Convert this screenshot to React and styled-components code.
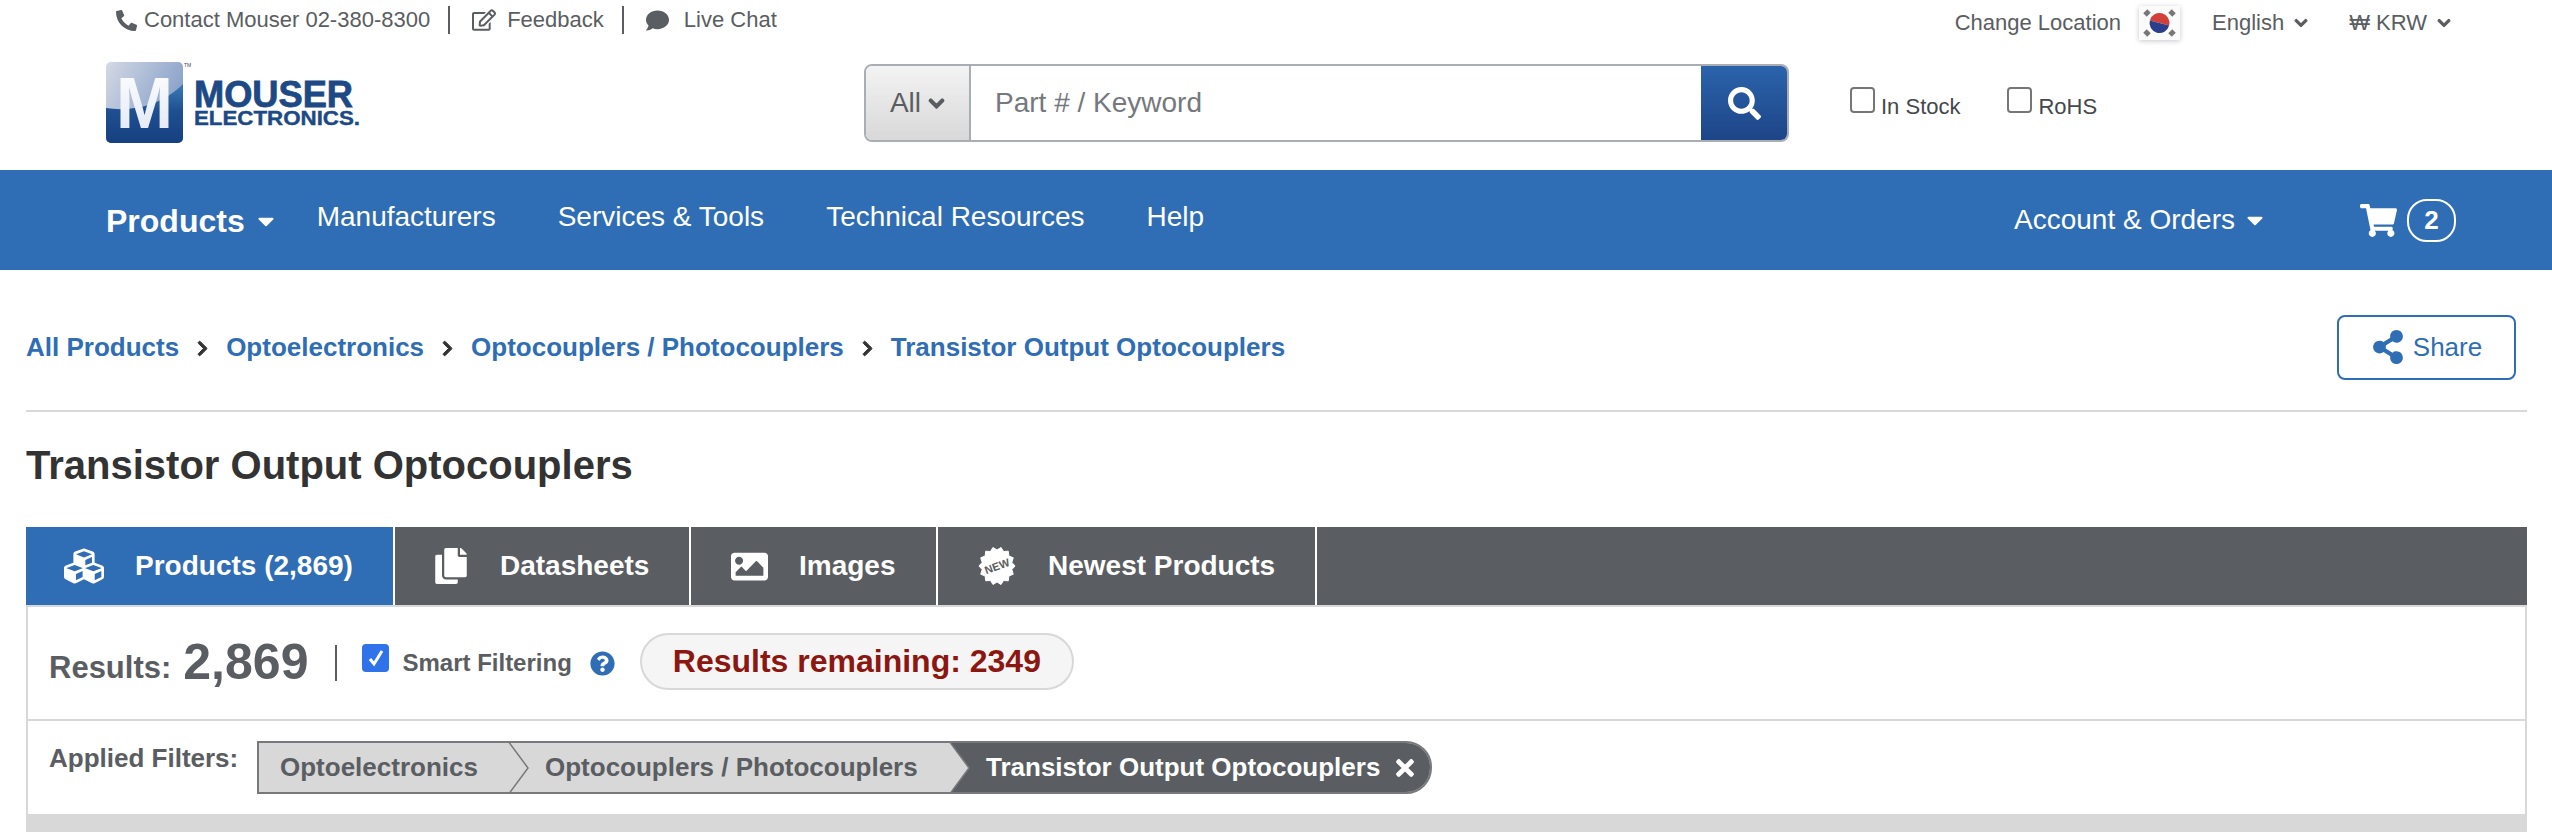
import styled, { createGlobalStyle } from "styled-components";
import {
  FaPhoneAlt, FaRegEdit, FaComment, FaChevronDown, FaSearch, FaShoppingCart, FaChevronRight,
  FaShareAlt, FaCubes, FaCopy, FaImage, FaQuestionCircle, FaTimes, FaCaretDown,
} from "react-icons/fa";

const Global = createGlobalStyle`
  html, body { margin: 0; padding: 0; background: #fff; height: 832px; overflow: hidden; }
  body { font-family: "Liberation Sans", Arial, sans-serif; color: #5a5d61; }
  * { box-sizing: border-box; }
`;

const TopBar = styled.div`
  height: 62px;
  display: flex;
  justify-content: space-between;
  align-items: flex-start;
  padding: 0 101px 0 116px;
`;

const TopLeft = styled.div`
  display: flex;
  align-items: center;
  height: 40px;
  font-size: 22px;
`;

const TopLink = styled.span`
  display: flex;
  align-items: center;
  gap: ${(p) => p.$gap || 10}px;
  svg { flex: none; }
`;

const TopSep = styled.span`
  width: 2px;
  height: 28px;
  background: #5a5d61;
  margin: 0 22px 0 18px;
`;

const TopRight = styled.div`
  display: flex;
  align-items: center;
  height: 46px;
  font-size: 22px;
`;

const Flag = styled.span`
  display: flex;
  margin: 0 32px 0 18px;
  width: 41px;
  height: 34px;
  box-shadow: 0 1px 5px rgba(0, 0, 0, 0.22);
  background: #fbfbfb;
`;

const Dropdown = styled.span`
  display: flex;
  align-items: center;
  gap: 10px;
  margin-right: ${(p) => p.$mr || 0}px;
  svg { stroke: currentColor; stroke-width: 40px; }
`;

const MainRow = styled.div`
  height: 108px;
  display: flex;
  padding-left: 106px;
`;

const LogoWrap = styled.div`
  width: 758px;
  height: 82px;
`;

const Search = styled.div`
  width: 925px;
  height: 78px;
  margin-top: 2px;
  display: flex;
  border: 2px solid #a9aeb4;
  border-radius: 8px;
  overflow: hidden;
`;

const SearchScope = styled.div`
  width: 105px;
  display: flex;
  align-items: center;
  justify-content: center;
  gap: 7px;
  font-size: 28px;
  color: #5a5d61;
  background: linear-gradient(#f3f3f3, #d8d8d8);
  border-right: 2px solid #a9aeb4;
  svg { stroke: currentColor; stroke-width: 40px; }
`;

const SearchField = styled.div`
  flex: 1;
  display: flex;
  align-items: center;
  padding-left: 24px;
  font-size: 28px;
  color: #75787c;
  background: #fff;
`;

const SearchButton = styled.div`
  width: 86px;
  display: flex;
  align-items: center;
  justify-content: center;
  color: #fff;
  background: linear-gradient(#2b63ab, #1d4587);
`;

const Checks = styled.div`
  display: flex;
  margin: 25px 0 0 61px;
  font-size: 22px;
  color: #45484c;
`;

const Check = styled.label`
  display: flex;
  align-items: flex-start;
  gap: 6px;
  margin-right: ${(p) => p.$mr || 0}px;
  span { margin-top: 7px; }
`;

const CheckBox = styled.i`
  display: block;
  width: 25px;
  height: 26px;
  border: 2px solid #767676;
  border-radius: 4px;
  background: #fff;
`;

const Nav = styled.nav`
  height: 100px;
  background: #2f6db5;
  color: #fff;
  display: flex;
  align-items: center;
  padding-left: 106px;
`;

const NavMain = styled.span`
  display: flex;
  align-items: center;
  gap: 8px;
  font-size: 32px;
  font-weight: bold;
  margin-right: 38px;
  padding-top: 2px;
`;

const NavItem = styled.span`
  font-size: 28px;
  margin-right: ${(p) => p.$mr}px;
  padding-bottom: 6px;
`;

const NavRight = styled.div`
  margin-left: auto;
  display: flex;
  align-items: center;
  padding-right: 96px;
`;

const Account = styled.span`
  display: flex;
  align-items: center;
  gap: 7px;
  font-size: 28px;
  margin-right: 92px;
`;

const Cart = styled.span`
  display: flex;
  align-items: center;
  gap: 10px;
`;

const CartCount = styled.span`
  width: 49px;
  height: 43px;
  display: flex;
  align-items: center;
  justify-content: center;
  border: 2px solid #fff;
  border-radius: 20px;
  font-size: 26px;
  font-weight: bold;
`;

const Content = styled.div`
  padding: 0 25px 0 26px;
`;

const CrumbRow = styled.div`
  height: 142px;
  display: flex;
  align-items: center;
  justify-content: space-between;
  padding-right: 11px;
  padding-top: 14px;
  border-bottom: 2px solid #d8d8d8;
`;

const Crumbs = styled.div`
  display: flex;
  align-items: center;
  font-size: 26px;
  font-weight: bold;
  color: #2f6db5;
  svg {
    color: #333;
    margin: 2px 15px 0 15px;
    stroke: currentColor;
    stroke-width: 30px;
  }
`;

const ShareButton = styled.div`
  width: 179px;
  height: 65px;
  display: flex;
  align-items: center;
  justify-content: center;
  gap: 8px;
  border: 2px solid #2f6db5;
  border-radius: 8px;
  color: #2f6db5;
  font-size: 26px;
`;

const Title = styled.h1`
  margin: 0;
  height: 115px;
  display: flex;
  align-items: center;
  padding-bottom: 9px;
  font-size: 40px;
  font-weight: bold;
  color: #333;
`;

const Tabs = styled.div`
  height: 78px;
  display: flex;
  background: #5a5d61;
`;

const Tab = styled.div`
  width: ${(p) => p.$w}px;
  display: flex;
  align-items: center;
  padding-left: ${(p) => p.$pad}px;
  gap: ${(p) => p.$gap}px;
  color: #fff;
  font-size: 28px;
  font-weight: bold;
  background: ${(p) => (p.$active ? "#2f6db5" : "#5a5d61")};
  border-right: 2px solid #fff;
  svg { flex: none; }
`;

const Panel = styled.div`
  border-top: 2px solid #d8d8d8;
  border-left: 2px solid #d8d8d8;
  border-right: 2px solid #d8d8d8;
`;

const ResultsRow = styled.div`
  height: 114px;
  display: flex;
  align-items: center;
  padding-left: 21px;
  border-bottom: 2px solid #d8d8d8;
`;

const ResultsLabel = styled.span`
  font-size: 31px;
  font-weight: bold;
  margin-top: 10px;
`;

const ResultsCount = styled.span`
  font-size: 50px;
  font-weight: bold;
  margin: 0 0 2px 12px;
`;

const RowSep = styled.span`
  width: 2px;
  height: 36px;
  background: #5a5d61;
  margin: 0 25px 0 27px;
`;

const SmartCheck = styled.span`
  width: 27px;
  height: 28px;
  border-radius: 4px;
  background: #2f72ea;
  display: flex;
  align-items: center;
  justify-content: center;
  margin: 0 13px 0 0;
  position: relative;
  top: -5px;
`;

const SmartLabel = styled.span`
  font-size: 24px;
  font-weight: bold;
  margin-right: 18px;
`;

const Remaining = styled.span`
  height: 57px;
  margin: 0 0 3px 25px;
  padding: 0 31px;
  display: flex;
  align-items: center;
  border: 2px solid #d8d8d8;
  border-radius: 29px;
  background: #f5f5f5;
  color: #8b1710;
  font-size: 32px;
  font-weight: bold;
`;

const FiltersRow = styled.div`
  height: 93px;
  display: flex;
  padding: 20px 0 0 21px;
`;

const FiltersLabel = styled.span`
  font-size: 26px;
  font-weight: bold;
  width: 208px;
  margin-top: 2px;
`;

const Chain = styled.div`
  height: 53px;
  display: flex;
  border: 2px solid #77797c;
  border-radius: 0 26px 26px 0;
  overflow: hidden;
  background: #d8d8d8;
  font-size: 26px;
  font-weight: bold;
`;

const Chip = styled.span`
  position: relative;
  display: flex;
  align-items: center;
  width: ${(p) => p.$w}px;
  padding-left: ${(p) => p.$pad}px;
  flex: none;
  svg { position: absolute; top: 0; right: -21px; z-index: 1; }
`;

const LastChip = styled.span`
  flex: 1;
  width: 480px;
  display: flex;
  align-items: center;
  padding-left: 36px;
  gap: 12px;
  background: #5a5d61;
  color: #fff;
`;

const Footer = styled.div`
  height: 40px;
  background: #d8d8d8;
`;

const Logo = () => (
  <svg width="254" height="82" viewBox="0 0 254 82">
    <defs>
      <linearGradient id="logoTop" x1="0" y1="0" x2="1" y2="0.6">
        <stop offset="0" stopColor="#d4d9e4" />
        <stop offset="1" stopColor="#7f9ac6" />
      </linearGradient>
      <linearGradient id="logoBottom" x1="0" y1="0" x2="0" y2="1">
        <stop offset="0" stopColor="#3a7cb6" />
        <stop offset="0.45" stopColor="#1f4f92" />
        <stop offset="1" stopColor="#164080" />
      </linearGradient>
      <linearGradient id="logoM" x1="0" y1="0" x2="0" y2="1">
        <stop offset="0" stopColor="#ffffff" />
        <stop offset="1" stopColor="#dfe6f4" />
      </linearGradient>
      <clipPath id="logoClip">
        <rect x="0" y="0" width="77" height="81" rx="5" />
      </clipPath>
    </defs>
    <g clipPath="url(#logoClip)">
      <rect width="77" height="81" fill="url(#logoTop)" />
      <path d="M0 46 C25 50 55 44 77 22 V81 H0 Z" fill="url(#logoBottom)" />
    </g>
    <text x="10" y="66" textLength="57" lengthAdjust="spacingAndGlyphs" fontFamily="Liberation Sans" fontWeight="bold" fontSize="72" fill="url(#logoM)">M</text>
    <text x="78" y="5" fontFamily="Liberation Sans" fontSize="5" fill="#445">TM</text>
    <text x="88" y="45" textLength="159" lengthAdjust="spacingAndGlyphs" fontFamily="Liberation Sans" fontWeight="bold" fontSize="37" fill="#1d4a86" stroke="#1d4a86" strokeWidth="0.8">MOUSER</text>
    <text x="88" y="63" textLength="166" lengthAdjust="spacingAndGlyphs" fontFamily="Liberation Sans" fontWeight="bold" fontSize="20" fill="#1d4a86" stroke="#1d4a86" strokeWidth="0.4">ELECTRONICS.</text>
  </svg>
);

const KoreaFlag = () => (
  <svg width="41" height="34" viewBox="0 0 41 34">
    <g filter="blur(0.6px)">
      <path d="M10.5 17 a10 10 0 0 1 20 0z" fill="#d3403a" transform="rotate(15 20.5 17)" />
      <path d="M10.5 17 a10 10 0 0 0 20 0z" fill="#2a3f8c" transform="rotate(15 20.5 17)" />
      <g stroke="#777" strokeWidth="5">
        <path d="M6 9 L10 5" />
        <path d="M31 5 L35 9" />
        <path d="M6 25 L10 29" />
        <path d="M31 29 L35 25" />
      </g>
    </g>
  </svg>
);

const ChipArrow = () => (
  <svg width="22" height="50" viewBox="0 0 22 50">
    <path d="M0 -2 L20 25 L0 52" fill="#d8d8d8" stroke="#77797c" strokeWidth="1.5" />
  </svg>
);

// scalloped seal behind the NEW label
const sealPoints = Array.from({ length: 28 }, (_, i) => {
  const a = (i / 28) * Math.PI * 2;
  const r = i % 2 ? 16 : 19;
  return `${20 + r * Math.cos(a) * 0.95},${20 + r * Math.sin(a)}`;
}).join(" ");

const NewSeal = () => (
  <svg width="40" height="40" viewBox="0 0 40 40">
    <polygon points={sealPoints} fill="#fff" stroke="#fff" strokeLinejoin="round" />
    <text
      x="20"
      y="24"
      textAnchor="middle"
      fontFamily="Liberation Sans"
      fontWeight="bold"
      fontSize="11"
      fill="#5a5d61"
      transform="rotate(-20 20 20)"
    >
      NEW
    </text>
  </svg>
);

export default function App() {
  return (
    <>
      <Global />
      <TopBar>
        <TopLeft>
          <TopLink $gap={7}><FaPhoneAlt size={21} />Contact Mouser 02-380-8300</TopLink>
          <TopSep />
          <TopLink $gap={11}><FaRegEdit size={24} />Feedback</TopLink>
          <TopSep />
          <TopLink $gap={15}><FaComment size={23} />Live Chat</TopLink>
        </TopLeft>
        <TopRight>
          Change Location
          <Flag><KoreaFlag /></Flag>
          <Dropdown $mr={41}>English<FaChevronDown size={14} /></Dropdown>
          <Dropdown>₩ KRW<FaChevronDown size={14} /></Dropdown>
        </TopRight>
      </TopBar>
      <MainRow>
        <LogoWrap><Logo /></LogoWrap>
        <Search>
          <SearchScope>All<FaChevronDown size={17} /></SearchScope>
          <SearchField>Part # / Keyword</SearchField>
          <SearchButton><FaSearch size={33} /></SearchButton>
        </Search>
        <Checks>
          <Check $mr={47}><CheckBox /><span>In Stock</span></Check>
          <Check><CheckBox /><span>RoHS</span></Check>
        </Checks>
      </MainRow>
      <Nav>
        <NavMain>Products<FaCaretDown size={26} /></NavMain>
        <NavItem $mr={62}>Manufacturers</NavItem>
        <NavItem $mr={62}>Services &amp; Tools</NavItem>
        <NavItem $mr={62}>Technical Resources</NavItem>
        <NavItem $mr={0}>Help</NavItem>
        <NavRight>
          <Account>Account &amp; Orders<FaCaretDown size={26} /></Account>
          <Cart><FaShoppingCart size={37} /><CartCount>2</CartCount></Cart>
        </NavRight>
      </Nav>
      <Content>
        <CrumbRow>
          <Crumbs>
            All Products<FaChevronRight size={17} />
            Optoelectronics<FaChevronRight size={17} />
            Optocouplers / Photocouplers<FaChevronRight size={17} />
            Transistor Output Optocouplers
          </Crumbs>
          <ShareButton><FaShareAlt size={34} />Share</ShareButton>
        </CrumbRow>
        <Title>Transistor Output Optocouplers</Title>
        <Tabs>
          <Tab $w={369} $active $pad={38} $gap={31}><FaCubes size={40} />Products (2,869)</Tab>
          <Tab $w={296} $pad={38} $gap={31}><FaCopy size={36} />Datasheets</Tab>
          <Tab $w={247} $pad={40} $gap={31}><FaImage size={37} />Images</Tab>
          <Tab $w={379} $pad={39} $gap={31}><NewSeal />Newest Products</Tab>
        </Tabs>
        <Panel>
          <ResultsRow>
            <ResultsLabel>Results:</ResultsLabel>
            <ResultsCount>2,869</ResultsCount>
            <RowSep />
            <SmartCheck>
              <svg width="18" height="18" viewBox="0 0 18 18">
                <path d="M3 10 L7 15 L15 2" fill="none" stroke="#fff" strokeWidth="3" />
              </svg>
            </SmartCheck>
            <SmartLabel>Smart Filtering</SmartLabel>
            <FaQuestionCircle size={25} color="#2f6db5" />
            <Remaining>Results remaining: 2349</Remaining>
          </ResultsRow>
          <FiltersRow>
            <FiltersLabel>Applied Filters:</FiltersLabel>
            <Chain>
              <Chip $w={250} $pad={21}>Optoelectronics<ChipArrow /></Chip>
              <Chip $w={441} $pad={36}>Optocouplers / Photocouplers<ChipArrow /></Chip>
              <LastChip>Transistor Output Optocouplers<FaTimes size={26} /></LastChip>
            </Chain>
          </FiltersRow>
        </Panel>
        <Footer />
      </Content>
    </>
  );
}
